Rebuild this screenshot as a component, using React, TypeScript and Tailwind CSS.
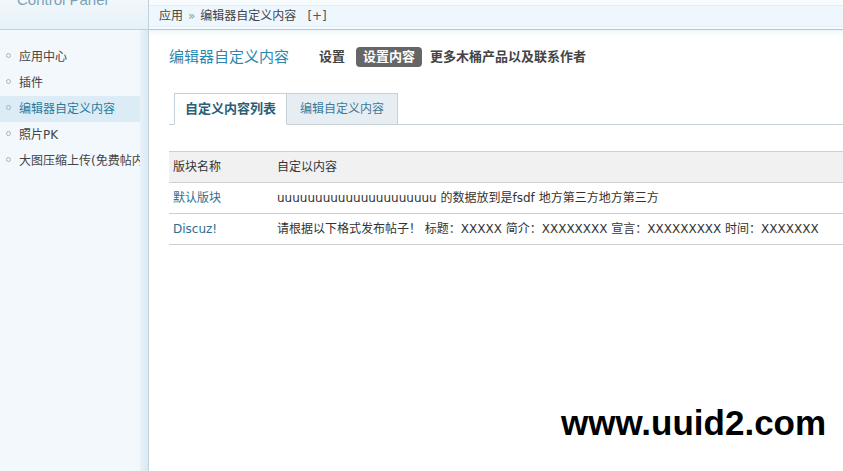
import React from "react";

const FONT = { fontFamily: '"DejaVu Sans", "Noto Sans CJK SC", sans-serif' };

const navItems = ["应用中心", "插件", "编辑器自定义内容", "照片PK", "大图压缩上传(免费帖内容)"];

export default function App() {
  return (
    <div className="relative flex h-[471px] w-[843px] flex-col overflow-hidden bg-white text-[12px] text-[#444]" style={FONT}>
      {/* header */}
      <div className="flex h-[30px] shrink-0">
        <div className="w-[149px] overflow-hidden border-b border-r border-[#c3d0d8] bg-gradient-to-b from-[#f1f7fb] to-[#e6f1f8]">
          <div className="mt-[-9px] pl-[17px] text-[15px] leading-[18px] text-[#7aa3b8]" style={{ fontFamily: '"Liberation Sans", sans-serif' }}>
            Control Panel
          </div>
        </div>
        <div className="flex flex-1 flex-col border-b border-[#b9c5cc] bg-[#f8fbfd]">
          <div className="mt-[5px] flex h-[22px] items-center border-y border-[#e3eef5] bg-[#eef7fd] pl-[10px] text-[12px] text-[#444]">
            <span>应用</span>
            <span className="mx-[5px] text-[12px] text-[#999]">»</span>
            <span>编辑器自定义内容</span>
            <span className="ml-[11px] text-[#555]">[+]</span>
          </div>
        </div>
      </div>

      {/* body */}
      <div className="flex flex-1">
        {/* sidebar */}
        <div className="flex w-[149px] shrink-0 border-r border-[#c3d3dd]">
          <div className="flex w-[140px] flex-col bg-[#f2f8fc] pt-[14px]">
            {navItems.map((item, i) => {
              const active = i === 2;
              return (
                <div
                  key={item}
                  className={`flex h-[26px] items-center overflow-hidden whitespace-nowrap ${active ? "bg-[#dcecf6] text-[#2b7a9a]" : "text-[#444]"}`}
                >
                  <span className="ml-[6px] mr-[8px] mb-[4px] h-[5px] w-[5px] shrink-0 rounded-full border border-[#aab4ba]" />
                  <span>{item}</span>
                </div>
              );
            })}
          </div>
          <div className="w-[8px] bg-gradient-to-r from-[#e9f2f8] to-[#d9e9f3]" />
        </div>

        {/* main */}
        <div className="flex flex-1 flex-col bg-gradient-to-b from-[#eef6fb] via-white to-white bg-[length:100%_14px] bg-no-repeat pl-[20px]">
          <div className="mt-[17px] flex h-[20px] items-center">
            <span className="text-[15px] text-[#2a87ae]">编辑器自定义内容</span>
            <span className="ml-[30px] text-[13px] font-bold text-[#444]">设置</span>
            <span className="ml-[11px] flex h-[20px] items-center rounded-[4px] bg-[#666] px-[7px] text-[13px] font-bold text-white">设置内容</span>
            <span className="ml-[8px] text-[13px] font-bold text-[#444]">更多木桶产品以及联系作者</span>
          </div>

          <div className="mt-[26px] flex items-end border-b border-[#c6d0d6] pl-[5px]">
            <div className="mb-[-1px] flex h-[32px] items-center border border-b-white border-[#c6d0d6] bg-white px-[10px] text-[13px] font-bold text-[#2c5d75]">
              自定义内容列表
            </div>
            <div className="mb-[-1px] flex h-[32px] items-center border border-l-0 border-[#c6d0d6] bg-[#e6eef4] px-[13px] text-[12px] text-[#3b7a98]">
              编辑自定义内容
            </div>
          </div>

          <div className="mt-[26px] flex flex-col border-t border-[#cfcfcf]">
            <div className="flex h-[31px] items-center border-b border-[#cfcfcf] bg-[#f1f1f1] text-[#333]">
              <div className="w-[108px] pl-[4px]">版块名称</div>
              <div>自定以内容</div>
            </div>
            <div className="flex h-[31px] items-center border-b border-[#cfcfcf] text-[#333]">
              <div className="w-[108px] pl-[4px] text-[#2d6f8f]">默认版块</div>
              <div className="whitespace-nowrap">uuuuuuuuuuuuuuuuuuuuu 的数据放到是fsdf 地方第三方地方第三方</div>
            </div>
            <div className="flex h-[31px] items-center border-b border-[#cfcfcf] text-[#333]">
              <div className="w-[108px] pl-[4px] text-[#2d6f8f]">Discuz!</div>
              <div className="whitespace-nowrap">请根据以下格式发布帖子！ 标题：XXXXX 简介：XXXXXXXX 宣言：XXXXXXXXX 时间：XXXXXXX</div>
            </div>
          </div>
        </div>
      </div>

      {/* watermark */}
      <div
        className="absolute left-[561px] top-[402px] text-[35px] font-bold leading-[42px] text-black"
        style={{ fontFamily: '"Liberation Sans", Arial, sans-serif' }}
      >
        www.uuid2.com
      </div>
    </div>
  );
}
